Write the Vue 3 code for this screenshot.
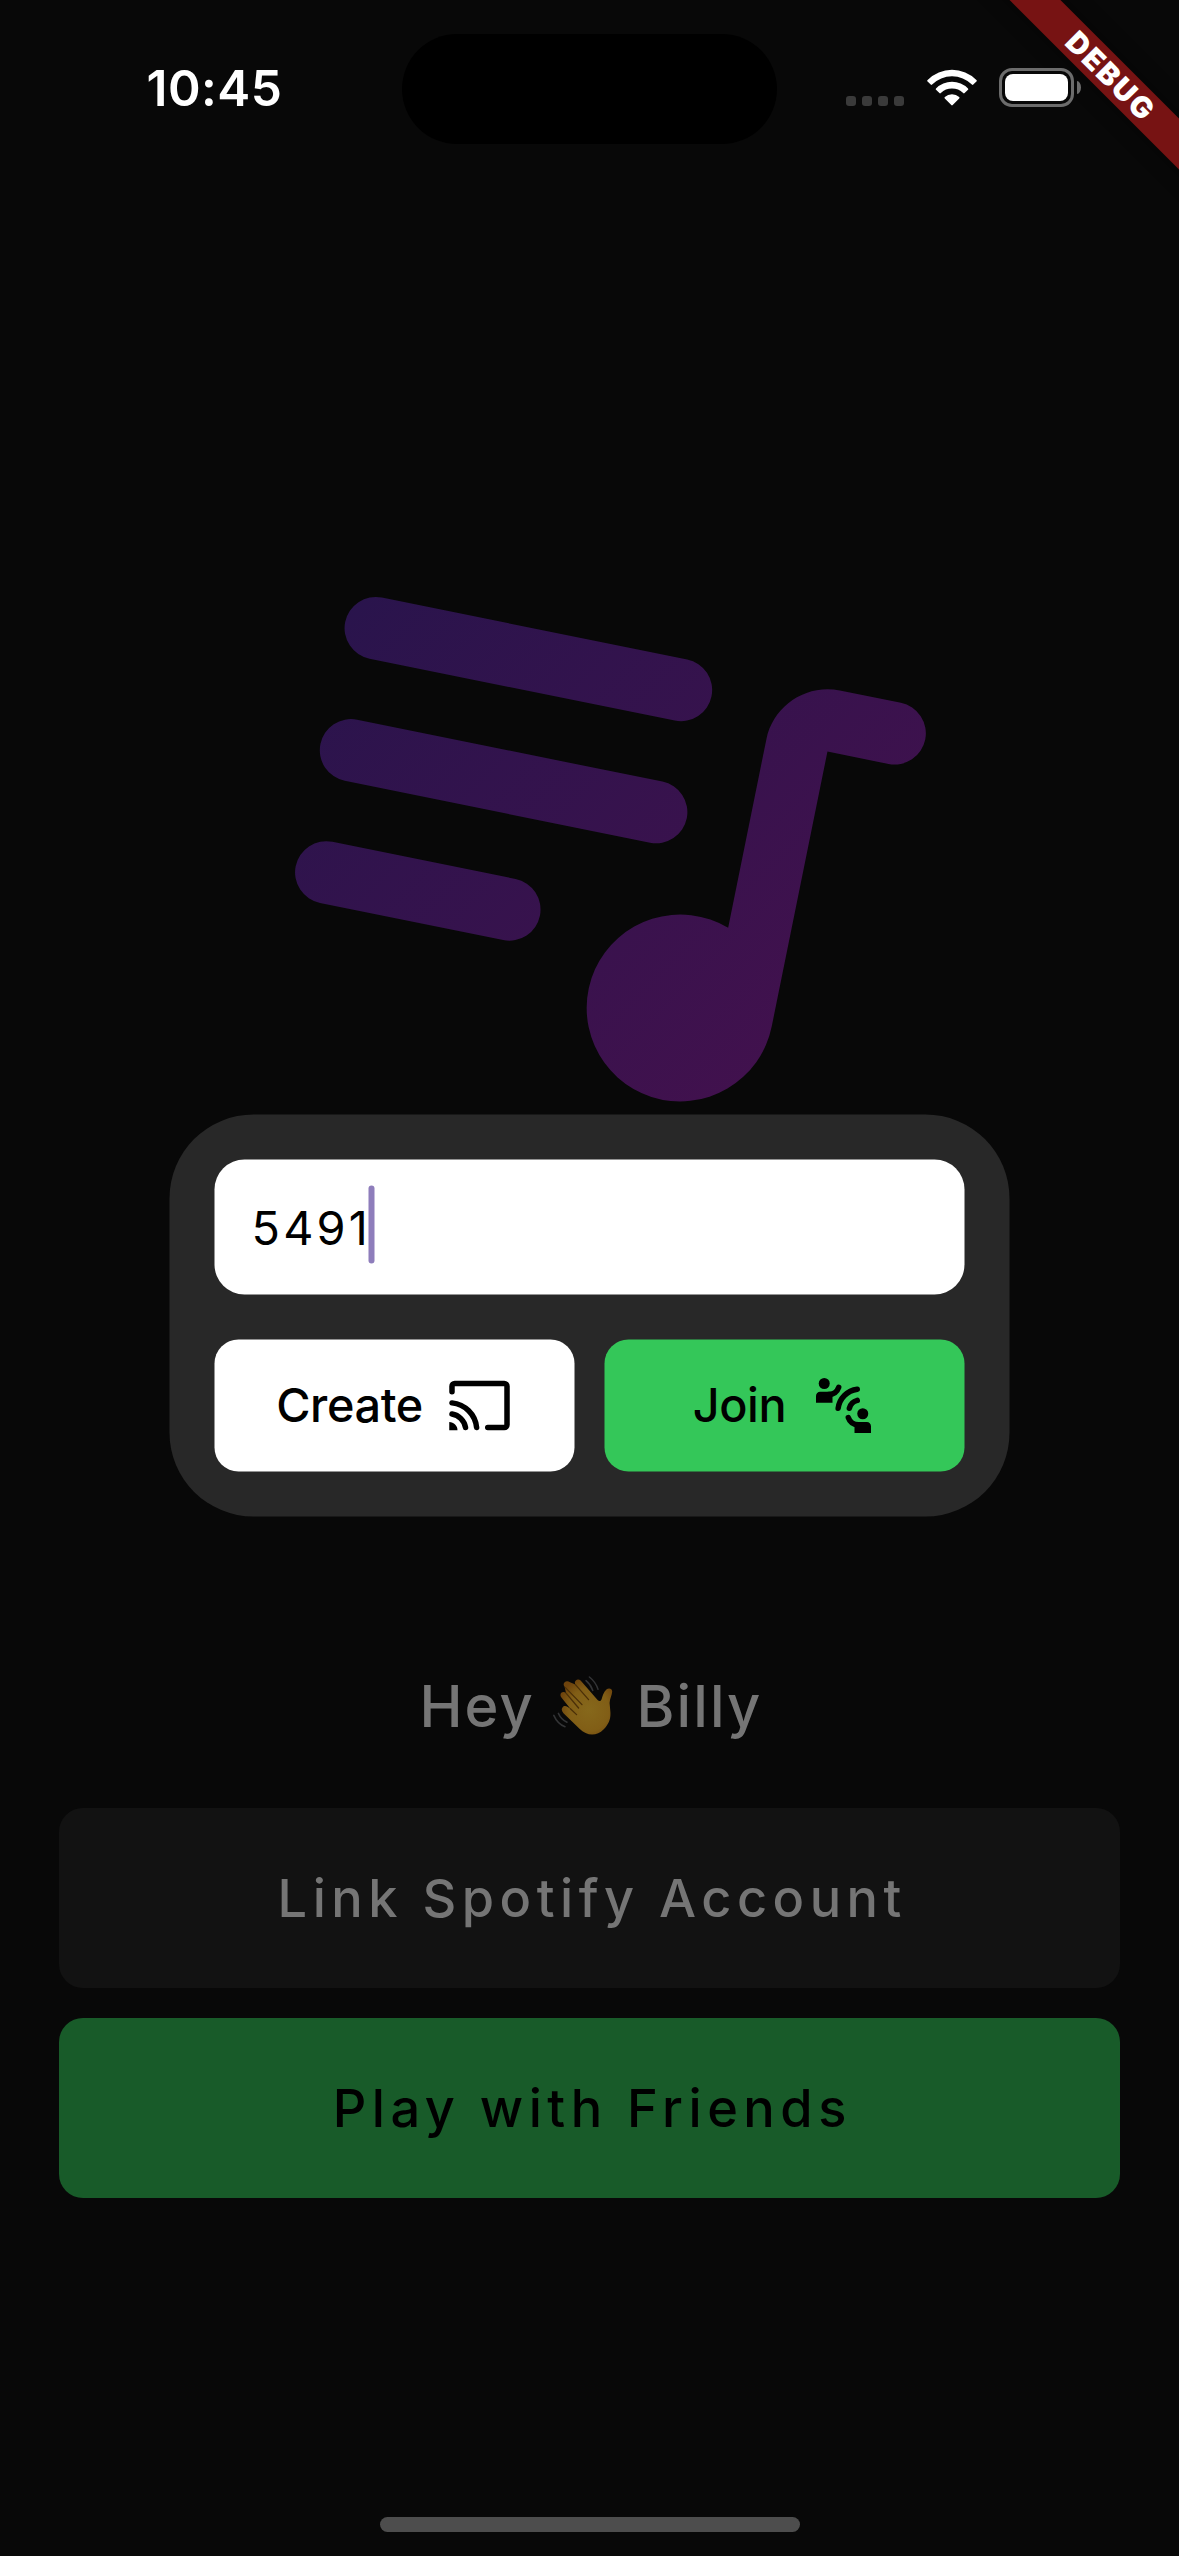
<script setup>
import { ref } from 'vue'

const time = ref('10:45')
const userName = ref('Billy')
const code = ref('5491')
</script>

<template>
  <div class="phone">
    <header class="status">
      <div class="side left"><span class="time">{{ time }}</span></div>
      <div class="island"></div>
      <div class="side right">
        <div class="dots"><i v-for="n in 4" :key="n"></i></div>
        <svg class="wifi" viewBox="0 0 50 37">
          <path d="M0.6 10.9 A34.5 34.5 0 0 1 49.4 10.9 Q50.3 11.8 49.4 12.6 L46.3 15.6 Q45.6 16.2 44.9 15.5 A28.3 28.3 0 0 0 5.1 15.5 Q4.4 16.2 3.7 15.6 L0.6 12.6 Q-0.3 11.8 0.6 10.9Z" />
          <path d="M9 19.4 A22.6 22.6 0 0 1 41 19.4 Q41.7 20.1 41 20.8 L37.6 24.1 Q36.9 24.8 36.2 24.1 A16.2 16.2 0 0 0 13.8 24.1 Q13.1 24.8 12.4 24.1 L9 20.8 Q8.3 20.1 9 19.4Z" />
          <path d="M17.8 28.1 A10.6 10.6 0 0 1 32.2 28.1 Q32.9 28.8 32.2 29.5 L25.7 36.1 Q25 36.8 24.3 36.1 L17.8 29.5 Q17.1 28.8 17.8 28.1Z" />
        </svg>
        <div class="battery"><div class="cell"><div class="charge"></div></div><div class="nub"></div></div>
      </div>
    </header>

    <main class="home">
      <svg class="hero" viewBox="0 0 750 750">
        <defs>
          <linearGradient id="heroFill" gradientUnits="userSpaceOnUse" x1="0" y1="0" x2="750" y2="750">
            <stop offset="0" stop-color="#22154c" />
            <stop offset="1" stop-color="#4a104e" />
          </linearGradient>
          <mask id="heroMask" maskUnits="userSpaceOnUse" x="0" y="0" width="750" height="750">
            <g fill="#fff" transform="translate(374 375.3) rotate(11.46) scale(31.15) translate(-12 -12)">
              <path d="M14 6H4a1 1 0 0 0 0 2h10a1 1 0 0 0 0-2zm0 4H4a1 1 0 0 0 0 2h10a1 1 0 0 0 0-2zM4 16h6a1 1 0 0 0 0-2H4a1 1 0 0 0 0 2z" />
              <path d="M19 6c-1.1 0-2 .9-2 2v6.18A3 3 0 1 0 19 17V8h2a1 1 0 0 0 0-2h-2z" />
            </g>
          </mask>
        </defs>
        <rect width="750" height="750" fill="url(#heroFill)" mask="url(#heroMask)" />
      </svg>

      <h1 class="greeting">
        <span>Hey</span>
        <svg class="wave" viewBox="0 0 60 60" role="img" aria-label="Waving hand">
          <defs>
            <radialGradient id="skin" cx="0.55" cy="0.55" r="0.6">
              <stop offset="0" stop-color="#86681b" />
              <stop offset="0.65" stop-color="#815e16" />
              <stop offset="1" stop-color="#6e430c" />
            </radialGradient>
          </defs>
          <path fill="url(#skin)" d="M9.5 31.5 Q7.6 34 10.5 37.2 L26.5 52.8 C34 60.5 44 60.3 50.5 53.5 C56 48 57.8 42.5 57.4 36 L56.6 27 C56.8 22.5 59 19.5 59.2 15.5 C59.2 12.6 55.8 11.4 53.4 13.6 C50.4 16.4 49.6 20 48.6 23.2 C47.6 25.4 46.2 25.6 44.6 24 L27.6 4.6 C25 1.6 20.2 4.8 22.4 8.4 L17 6.2 C13.2 3.4 8.6 7 11.6 10.8 L13 17 C9.4 14.2 5.6 18 8.4 21.4 L17.4 32.8 L14.4 30.8 C12.6 29.6 10.6 29.8 9.5 31.5Z" />
          <g fill="none" stroke="#4a2f08" stroke-width="1.3" stroke-linecap="round">
            <path d="M22.2 8.4 L35.6 23.6M12.4 11.6 L29 28.6M13 17.2 L25.6 32M17.4 32.8 L23.6 38.6" />
          </g>
          <g fill="none" stroke="#333436" stroke-width="1.5" stroke-linecap="round">
            <path d="M36.4 1 C40.4 4.2 43.4 8.2 45 13.2M33 4.6 C36.2 7.2 38.4 10.4 39.8 14.4M0.8 39.4 C3.2 45 7 48.8 12 50.8M5.4 37.4 C7.2 41.6 10 44.4 14 46.2" />
          </g>
        </svg>
        <span>{{ userName }}</span>
      </h1>

      <button class="wide link">Link Spotify Account</button>
      <button class="wide play">Play with Friends</button>
    </main>

    <div class="home-indicator"></div>

    <section class="overlay">
      <div class="dialog">
        <div class="field"><span class="code">{{ code }}</span><i class="caret"></i></div>
        <div class="actions">
          <button class="action create">
            <span>Create</span>
            <svg class="icon" viewBox="0 0 24 24">
              <g fill="none" stroke="#000" stroke-width="2" stroke-linecap="round">
                <path d="M2 7V5a1 1 0 0 1 1-1h18a1 1 0 0 1 1 1v14a1 1 0 0 1-1 1h-6" />
                <path d="M2 11.05A10 10 0 0 1 10.95 20M2 15.08A6 6 0 0 1 6.92 20" />
              </g>
              <path d="M1 18v3h3c0-1.66-1.34-3-3-3z" />
            </svg>
          </button>
          <button class="action join">
            <span>Join</span>
            <svg class="icon" viewBox="0 0 24 24">
              <circle cx="5" cy="4" r="2" /><circle cx="19" cy="15" r="2" />
              <path d="M8 11H2V8.5C2 7.67 2.67 7 3.5 7H8zM16 22h6v-2.5c0-.83-.67-1.5-1.5-1.5H16z" />
              <g fill="none" stroke="#000" stroke-width="2" stroke-linecap="round">
                <path d="M10.06 13A8 8 0 0 1 17 6.06M14.13 13A4 4 0 0 1 17 10.13" />
                <path d="M10.25 5.4C9.7 7 8.3 8 6.5 8M13.75 16.4C14.3 18 15.7 19 17.5 19" />
              </g>
            </svg>
          </button>
        </div>
      </div>
    </section>

    <div class="banner"><span>DEBUG</span></div>
  </div>
</template>

<style>
body { background: #080808; }
</style>

<style scoped>
.phone {
  position: relative;
  width: 1179px;
  height: 2556px;
  overflow: hidden;
  display: flex;
  flex-direction: column;
  align-items: center;
  background: #080808;
  color: #757575;
  font-family: Inter, "Liberation Sans", sans-serif;
}
.phone * { box-sizing: border-box; }
button { border: 0; padding: 0; margin: 0; font: inherit; color: #000; }

.status { position: relative; z-index: 2; width: 100%; height: 177px; display: flex; flex: none; padding-top: 34px; }
.side { width: 402px; flex: none; height: 110px; display: flex; }
.left { padding-left: 146.5px; padding-top: 24px; }
.time { font-size: 49.5px; line-height: 60px; font-weight: 600; color: #fff; letter-spacing: 0.5px; }
.island { width: 375px; flex: none; height: 110px; border-radius: 55px; background: #000; }
.right { padding-left: 69px; padding-top: 34px; align-items: flex-start; }
.dots { display: flex; gap: 6px; padding-top: 28px; }
.dots i { width: 10px; height: 10px; border-radius: 3px; background: #3a3a3a; }
.wifi { width: 50px; height: 37px; margin: 1px 0 0 23px; fill: #fff; }
.battery { display: flex; align-items: center; gap: 3px; margin-left: 22px; }
.cell { width: 75px; height: 39px; border: 3px solid #6c6c6c; border-radius: 13px; padding: 3px; }
.charge { height: 100%; border-radius: 8px; background: #fff; }
.nub { width: 4px; height: 13px; border-radius: 0 4px 4px 0 / 0 6.5px 6.5px 0; background: #6c6c6c; }

.home { width: 1061px; flex: 1; display: flex; flex-direction: column; align-items: center; padding-top: 278px; }
.hero { width: 750px; height: 750px; flex: none; }
.greeting {
  display: flex;
  align-items: center;
  height: 80px;
  margin: 461px 0 62px;
  padding-left: 2.8px;
  font-size: 57.8px;
  line-height: 80px;
  font-weight: 500;
  letter-spacing: 2.1px;
}
.wave { width: 60px; height: 60px; margin: 0 23.4px 0 18.3px; }
.wide {
  width: 100%;
  height: 180px;
  flex: none;
  border-radius: 24px;
  padding-left: 5.5px;
  font-size: 52.3px;
  font-weight: 500;
  letter-spacing: 5.5px;
}
.link { background: #121212; color: #757575; margin-bottom: 30px; }
.play { background: #185b29; }
.home-indicator { width: 420px; height: 15px; border-radius: 7.5px; background: #4d4d4d; margin-bottom: 24px; flex: none; }

.overlay { position: absolute; inset: 0; padding: 1114px 0 0 169px; }
.dialog {
  width: 840px;
  padding: 45px;
  border-radius: 84px;
  background: #282828;
  display: flex;
  flex-direction: column;
  gap: 45px;
  transform: translate(0.5px, 0.5px);
}
.field { height: 135px; border-radius: 30px; background: #fff; display: flex; align-items: flex-start; padding: 25.5px 37px; }
.code { font-size: 46.8px; line-height: 85px; color: #000; letter-spacing: 3.2px; }
.caret { width: 6px; height: 78px; border-radius: 3px; background: #8e7dbb; margin-left: -2.2px; }
.actions { display: flex; gap: 30px; }
.action {
  flex: 1;
  height: 132px;
  border-radius: 24px;
  display: flex;
  align-items: center;
  justify-content: center;
  gap: 24px;
  font-size: 46.8px;
  font-weight: 500;
  letter-spacing: -0.4px;
}
.action span { margin-top: -2px; }
.create { background: #fff; }
.join { background: #34c759; }
.icon { width: 66px; height: 66px; }

.banner {
  position: absolute;
  left: 907.3px;
  top: 53.7px;
  width: 400px;
  height: 36px;
  padding-left: 11.5px;
  transform: rotate(45deg);
  display: flex;
  align-items: center;
  justify-content: center;
  background: #771313;
  box-shadow: 0 0 18px rgba(0, 0, 0, 0.5);
  color: #fff;
  font-size: 29.5px;
  font-weight: 900;
  letter-spacing: 2px;
}
</style>
